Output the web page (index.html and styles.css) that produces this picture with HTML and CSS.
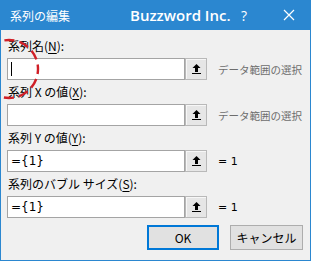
FILE: index.html
```html
<!DOCTYPE html>
<html lang="ja">
<head>
<meta charset="utf-8">
<title>系列の編集</title>
<link rel="stylesheet" href="styles.css">
</head>
<body>
<div class="window">
  <div class="titlebar">
    <span class="t-title">系列の編集</span>
    <span class="t-brand">Buzzword Inc.</span>
    <span class="t-help">?</span>
    <span class="t-close"><svg width="12" height="12" viewBox="0 0 12 12"><path d="M1 1L11 11M11 1L1 11" stroke="#fff" stroke-width="1.2"/></svg></span>
  </div>
  <div class="body">
    <div class="field">
      <div class="label">系列名(<u>N</u>):</div>
      <div class="row">
        <div class="input"><span class="caret"></span></div>
        <div class="refbtn"><svg width="11" height="12" viewBox="0 0 11 12"><path d="M5.5 1L1.5 5H4V9H7V5H9.5Z" fill="#000"/><rect x="1" y="10" width="9" height="1" fill="#000"/></svg></div>
        <div class="hint">データ範囲の選択</div>
      </div>
    </div>
    <div class="field">
      <div class="label">系列 X の値(<u>X</u>):</div>
      <div class="row">
        <div class="input"></div>
        <div class="refbtn"><svg width="11" height="12" viewBox="0 0 11 12"><path d="M5.5 1L1.5 5H4V9H7V5H9.5Z" fill="#000"/><rect x="1" y="10" width="9" height="1" fill="#000"/></svg></div>
        <div class="hint">データ範囲の選択</div>
      </div>
    </div>
    <div class="field">
      <div class="label">系列 Y の値(<u>Y</u>):</div>
      <div class="row">
        <div class="input"><span class="val">={1}</span></div>
        <div class="refbtn"><svg width="11" height="12" viewBox="0 0 11 12"><path d="M5.5 1L1.5 5H4V9H7V5H9.5Z" fill="#000"/><rect x="1" y="10" width="9" height="1" fill="#000"/></svg></div>
        <div class="result">= 1</div>
      </div>
    </div>
    <div class="field">
      <div class="label">系列のバブル サイズ(<u>S</u>):</div>
      <div class="row">
        <div class="input"><span class="val">={1}</span></div>
        <div class="refbtn"><svg width="11" height="12" viewBox="0 0 11 12"><path d="M5.5 1L1.5 5H4V9H7V5H9.5Z" fill="#000"/><rect x="1" y="10" width="9" height="1" fill="#000"/></svg></div>
        <div class="result">= 1</div>
      </div>
    </div>
    <div class="buttons">
      <div class="btn default">OK</div>
      <div class="btn">キャンセル</div>
    </div>
  </div>
  <svg class="annot" width="311" height="261" viewBox="0 0 311 261"><circle cx="9" cy="69" r="29" fill="none" stroke="#d01f27" stroke-width="2.4" stroke-dasharray="10 5.2" stroke-dashoffset="5"/></svg>
</div>
</body>
</html>
```
FILE: styles.css
```css
html, body { margin: 0; padding: 0; }
body { width: 311px; height: 261px; overflow: hidden; background: #f0f0f0; font-family: "Noto Sans CJK JP", "Noto Sans", sans-serif; }
.window { position: relative; width: 311px; height: 261px; box-sizing: border-box; border: 1px solid #2b87d0; border-top: 0; background: #f0f0f0; }
.titlebar { display: flex; align-items: center; height: 30px; margin: 0 -1px; background: #2b87d0; color: #fff; }
.t-title { width: 130px; padding-left: 10px; box-sizing: border-box; font-size: 12px; }
.t-brand { width: 110px; font-family: "Open Sans", sans-serif; font-weight: 600; font-size: 15px; }
.t-help { width: 42px; padding-left: 1px; box-sizing: border-box; font-family: "Open Sans", sans-serif; font-size: 14px; }
.t-close { display: flex; align-items: center; padding-left: 1px; }
.body { padding: 4px 7px 0 6px; }
.label { height: 24px; line-height: 24px; padding-left: 1px; font-size: 12px; color: #000; }
.label u { text-underline-offset: 2px; }
.row { display: flex; align-items: center; height: 22px; }
.input { width: 178px; height: 22px; box-sizing: border-box; border: 1px solid #a4a4a4; background: #fff; display: flex; align-items: center; padding-left: 3px; }
.caret { width: 1px; height: 14px; background: #000; }
.val { font-family: "DejaVu Sans", sans-serif; font-size: 12px; color: #000; }
.refbtn { width: 22px; height: 22px; box-sizing: border-box; border: 1px solid #b9b9b9; background: #e6e6e6; display: flex; align-items: center; justify-content: center; box-shadow: inset 1px 1px 0 #f7f7f7; }
.hint { margin-left: 11px; font-size: 10.5px; color: #6d6d6d; }
.result { margin-left: 11px; font-family: "DejaVu Sans", sans-serif; font-size: 11px; color: #000; }
.buttons { display: flex; justify-content: flex-end; gap: 11px; margin-top: 7px; }
.btn { width: 73px; height: 25px; box-sizing: border-box; border: 1px solid #adadad; background: #e1e1e1; font-size: 12px; display: flex; align-items: center; justify-content: center; color: #000; }
.btn.default { border: 2px solid #0078d7; width: 72px; }
.annot { position: absolute; left: -1px; top: 0; pointer-events: none; }
```
